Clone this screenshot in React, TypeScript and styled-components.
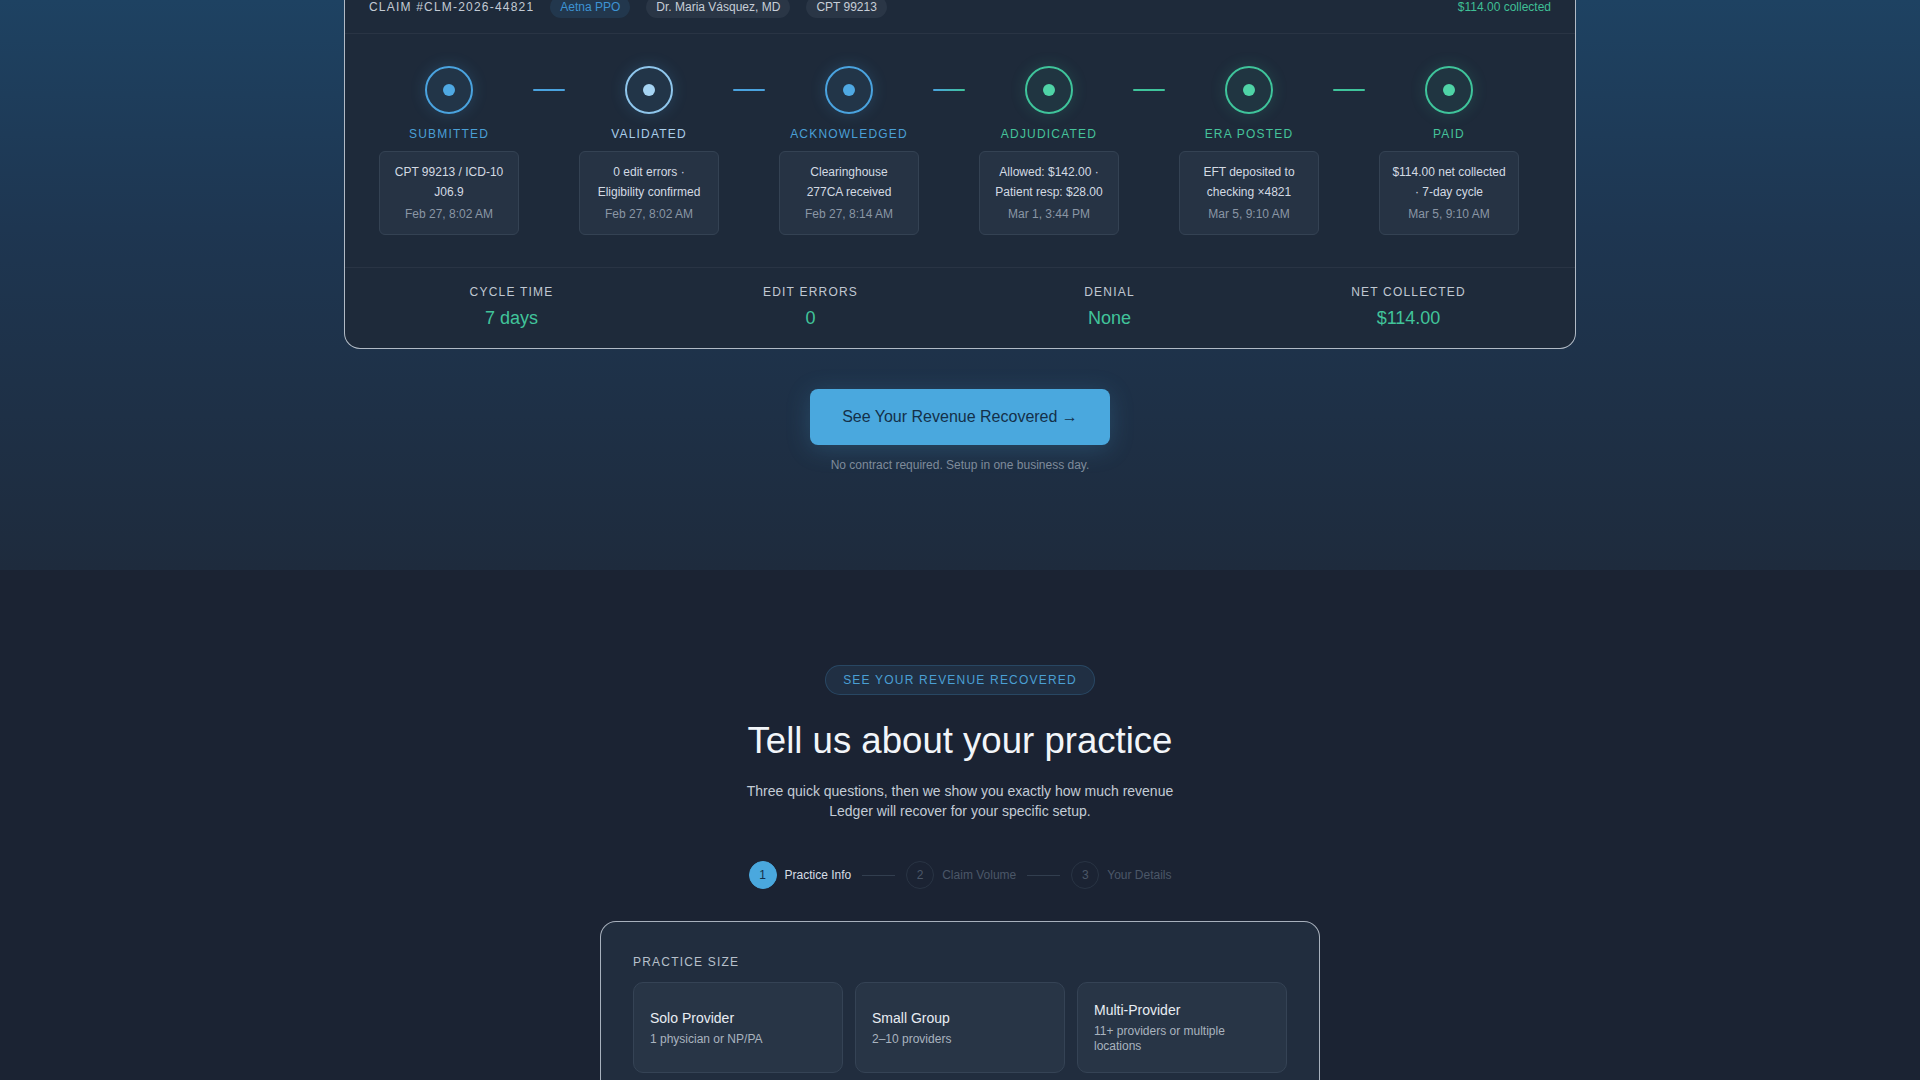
import styled, { createGlobalStyle } from "styled-components";

type Tone = "blue" | "light" | "green";

interface Stage {
  label: string;
  tone: Tone;
  lines: string[];
  date: string;
}

const stages: Stage[] = [
  { label: "Submitted", tone: "blue", lines: ["CPT 99213 / ICD-10", "J06.9"], date: "Feb 27, 8:02 AM" },
  { label: "Validated", tone: "light", lines: ["0 edit errors ·", "Eligibility confirmed"], date: "Feb 27, 8:02 AM" },
  { label: "Acknowledged", tone: "blue", lines: ["Clearinghouse", "277CA received"], date: "Feb 27, 8:14 AM" },
  { label: "Adjudicated", tone: "green", lines: ["Allowed: $142.00 ·", "Patient resp: $28.00"], date: "Mar 1, 3:44 PM" },
  { label: "ERA Posted", tone: "green", lines: ["EFT deposited to", "checking ×4821"], date: "Mar 5, 9:10 AM" },
  { label: "Paid", tone: "green", lines: ["$114.00 net collected", "· 7-day cycle"], date: "Mar 5, 9:10 AM" },
];

const stats = [
  { label: "Cycle Time", value: "7 days" },
  { label: "Edit Errors", value: "0" },
  { label: "Denial", value: "None" },
  { label: "Net Collected", value: "$114.00" },
];

const sizes = [
  { title: "Solo Provider", sub: "1 physician or NP/PA" },
  { title: "Small Group", sub: "2–10 providers" },
  { title: "Multi-Provider", sub: "11+ providers or multiple locations" },
];

const wizard = ["Practice Info", "Claim Volume", "Your Details"];

const ring: Record<Tone, string> = {
  blue: "#4aa3df",
  light: "#8fc6ec",
  green: "#3fc49b",
};

const dot: Record<Tone, string> = {
  blue: "#4fa9e3",
  light: "#a6d4f3",
  green: "#4fd3a6",
};

const labelColor: Record<Tone, string> = {
  blue: "#4a9fd6",
  light: "#a9cdea",
  green: "#45c39a",
};

// connector colours ignore the highlighted state of a step
const lineTone = (t: Tone) => ring[t === "light" ? "blue" : t];

export default function App() {
  return (
    <>
      <GlobalStyle />
      <TopSection>
        <Card>
          <ClaimHeader>
            <ClaimId>CLAIM #CLM-2026-44821</ClaimId>
            <Pill $accent>Aetna PPO</Pill>
            <Pill>Dr. Maria Vásquez, MD</Pill>
            <Pill>CPT 99213</Pill>
            <Collected>$114.00 collected</Collected>
          </ClaimHeader>

          <StepsRow>
            {stages.map((s, i) => (
              <StepGroup key={s.label}>
                {i > 0 && (
                  <Connector $from={lineTone(stages[i - 1].tone)} $to={lineTone(s.tone)} />
                )}
                <Step>
                  <Ring $tone={s.tone}>
                    <Dot $tone={s.tone} />
                  </Ring>
                  <StepLabel $tone={s.tone}>{s.label}</StepLabel>
                  <Detail>
                    {s.lines.map((l) => (
                      <DetailLine key={l}>{l}</DetailLine>
                    ))}
                    <DetailDate>{s.date}</DetailDate>
                  </Detail>
                </Step>
              </StepGroup>
            ))}
          </StepsRow>

          <Stats>
            {stats.map((s) => (
              <Stat key={s.label}>
                <StatLabel>{s.label}</StatLabel>
                <StatValue>{s.value}</StatValue>
              </Stat>
            ))}
          </Stats>
        </Card>

        <CtaButton>See Your Revenue Recovered →</CtaButton>
        <CtaNote>No contract required. Setup in one business day.</CtaNote>
      </TopSection>

      <FormSection>
        <Badge>SEE YOUR REVENUE RECOVERED</Badge>
        <Heading>Tell us about your practice</Heading>
        <Lead>
          Three quick questions, then we show you exactly how much revenue
          Ledger will recover for your specific setup.
        </Lead>

        <Wizard>
          {wizard.map((w, i) => (
            <WizardItem key={w}>
              {i > 0 && <WizardLine />}
              <WizardNum $active={i === 0}>{i + 1}</WizardNum>
              <WizardName $active={i === 0}>{w}</WizardName>
            </WizardItem>
          ))}
        </Wizard>

        <FormCard>
          <FieldLabel>PRACTICE SIZE</FieldLabel>
          <Options>
            {sizes.map((o) => (
              <Option key={o.title}>
                <OptionTitle>{o.title}</OptionTitle>
                <OptionSub>{o.sub}</OptionSub>
              </Option>
            ))}
          </Options>
        </FormCard>
      </FormSection>
    </>
  );
}

const GlobalStyle = createGlobalStyle`
  * { box-sizing: border-box; }
  body {
    margin: 0;
    background: #1b2333;
    font-family: "Liberation Sans", Arial, sans-serif;
    overflow-x: hidden;
  }
`;

const TopSection = styled.section`
  display: flex;
  flex-direction: column;
  align-items: center;
  padding-bottom: 97px;
  background: linear-gradient(180deg, #1e4262 0%, #1e3651 40%, #1e2b3d 100%);
`;

const Card = styled.div`
  width: 1232px;
  margin-top: -20px;
  background: #1e2a3a;
  border: 1px solid rgba(214, 222, 232, 0.8);
  border-radius: 16px;
`;

const ClaimHeader = styled.div`
  display: flex;
  align-items: center;
  gap: 16px;
  padding: 15px 24px;
  border-bottom: 1px solid rgba(255, 255, 255, 0.05);
`;

const ClaimId = styled.span`
  font-size: 12px;
  letter-spacing: 1.2px;
  color: #c3cad4;
`;

const Pill = styled.span<{ $accent?: boolean }>`
  font-size: 12px;
  line-height: 16px;
  padding: 3px 10px;
  border-radius: 999px;
  color: ${(p) => (p.$accent ? "#3d93d3" : "#c7ced7")};
  background: ${(p) => (p.$accent ? "rgba(61, 147, 211, 0.13)" : "#2a3646")};
`;

const Collected = styled.span`
  margin-left: auto;
  font-size: 12px;
  color: #3fbf95;
`;

const StepsRow = styled.div`
  display: flex;
  padding: 32px 24px 32px;
  border-bottom: 1px solid rgba(255, 255, 255, 0.05);
`;

const StepGroup = styled.div`
  display: flex;
`;

const Connector = styled.div<{ $from: string; $to: string }>`
  width: 32px;
  height: 2px;
  margin: 23px 4px 0;
  border-radius: 1px;
  background: linear-gradient(90deg, ${(p) => p.$from}, ${(p) => p.$to});
`;

const Step = styled.div`
  width: 160px;
  display: flex;
  flex-direction: column;
  align-items: center;
`;

const Ring = styled.div<{ $tone: Tone }>`
  width: 48px;
  height: 48px;
  border-radius: 50%;
  display: flex;
  align-items: center;
  justify-content: center;
  border: 2px solid ${(p) => ring[p.$tone]};
  background: ${(p) =>
    p.$tone === "green" ? "rgba(63, 196, 155, 0.08)" : "rgba(74, 163, 223, 0.09)"};
  box-shadow: 0 0 16px
    ${(p) => (p.$tone === "green" ? "rgba(63, 196, 155, 0.18)" : "rgba(74, 163, 223, 0.2)")};
`;

const Dot = styled.div<{ $tone: Tone }>`
  width: 12px;
  height: 12px;
  border-radius: 50%;
  background: ${(p) => dot[p.$tone]};
`;

const StepLabel = styled.div<{ $tone: Tone }>`
  margin-top: 12px;
  font-size: 12px;
  line-height: 16px;
  letter-spacing: 1.2px;
  text-transform: uppercase;
  color: ${(p) => labelColor[p.$tone]};
`;

const Detail = styled.div`
  width: 140px;
  margin-top: 9px;
  padding: 10px 8px;
  background: #263344;
  border: 1px solid #344253;
  border-radius: 6px;
  text-align: center;
`;

const DetailLine = styled.div`
  font-size: 12px;
  line-height: 20px;
  white-space: nowrap;
  color: #d3dae3;
`;

const DetailDate = styled.div`
  margin-top: 2px;
  font-size: 12px;
  line-height: 20px;
  color: #8a96a5;
`;

const Stats = styled.div`
  display: grid;
  grid-template-columns: repeat(4, 1fr);
  padding: 16px 17px 18px;
`;

const Stat = styled.div`
  display: flex;
  flex-direction: column;
  align-items: center;
  gap: 6px;
`;

const StatLabel = styled.div`
  font-size: 12px;
  line-height: 16px;
  letter-spacing: 1.2px;
  text-transform: uppercase;
  color: #c0c8d2;
`;

const StatValue = styled.div`
  font-size: 18px;
  line-height: 24px;
  color: #41c49a;
`;

const CtaButton = styled.button`
  margin-top: 40px;
  padding: 18px 32px;
  font-family: inherit;
  font-size: 16px;
  line-height: 20px;
  color: #143049;
  background: #4aa8de;
  border: none;
  border-radius: 8px;
  box-shadow: 0 4px 24px rgba(74, 168, 222, 0.22);
  cursor: pointer;
`;

const CtaNote = styled.p`
  margin: 12px 0 0;
  font-size: 12px;
  line-height: 16px;
  color: #7e8b9b;
`;

const FormSection = styled.section`
  display: flex;
  flex-direction: column;
  align-items: center;
  padding: 95px 0 80px;
  background: #1b2333;
`;

const Badge = styled.span`
  padding: 6px 17px;
  font-size: 12px;
  line-height: 16px;
  letter-spacing: 1.2px;
  color: #4a9fd4;
  background: rgba(74, 159, 212, 0.1);
  border: 1px solid rgba(74, 159, 212, 0.22);
  border-radius: 999px;
`;

const Heading = styled.h2`
  margin: 24px 0 0;
  font-size: 36.6px;
  line-height: 44px;
  font-weight: 400;
  color: #f2f5f9;
`;

const Lead = styled.p`
  margin: 18px 0 0;
  max-width: 440px;
  text-align: center;
  font-size: 14px;
  line-height: 20px;
  color: #c3ccd6;
`;

const Wizard = styled.div`
  display: flex;
  align-items: center;
  margin-top: 40px;
`;

const WizardItem = styled.div`
  display: flex;
  align-items: center;
`;

const WizardLine = styled.div`
  width: 33px;
  height: 1px;
  margin: 0 11px;
  background: #323e4f;
`;

const WizardNum = styled.div<{ $active: boolean }>`
  width: 28px;
  height: 28px;
  border-radius: 50%;
  display: flex;
  align-items: center;
  justify-content: center;
  font-size: 12px;
  color: ${(p) => (p.$active ? "#12304a" : "#4b5768")};
  background: ${(p) => (p.$active ? "#4aa8de" : "transparent")};
  border: 1px solid ${(p) => (p.$active ? "#4aa8de" : "#293444")};
`;

const WizardName = styled.span<{ $active: boolean }>`
  margin-left: 8px;
  font-size: 12px;
  color: ${(p) => (p.$active ? "#d7dee6" : "#4b5768")};
`;

const FormCard = styled.div`
  width: 720px;
  margin-top: 32px;
  padding: 32px;
  background: #212d3e;
  border: 1px solid rgba(214, 222, 232, 0.75);
  border-radius: 16px;
`;

const FieldLabel = styled.div`
  font-size: 12px;
  line-height: 16px;
  letter-spacing: 1.2px;
  color: #b7c0cb;
`;

const Options = styled.div`
  display: grid;
  grid-template-columns: repeat(3, 1fr);
  gap: 12px;
  margin-top: 12px;
`;

const Option = styled.div`
  display: flex;
  flex-direction: column;
  justify-content: center;
  padding: 18px 16px;
  background: #283546;
  border: 1px solid #354355;
  border-radius: 10px;
`;

const OptionTitle = styled.div`
  font-size: 14px;
  line-height: 18px;
  color: #e8edf3;
`;

const OptionSub = styled.div`
  margin-top: 5px;
  font-size: 12px;
  line-height: 15px;
  color: #a9b3bf;
`;
